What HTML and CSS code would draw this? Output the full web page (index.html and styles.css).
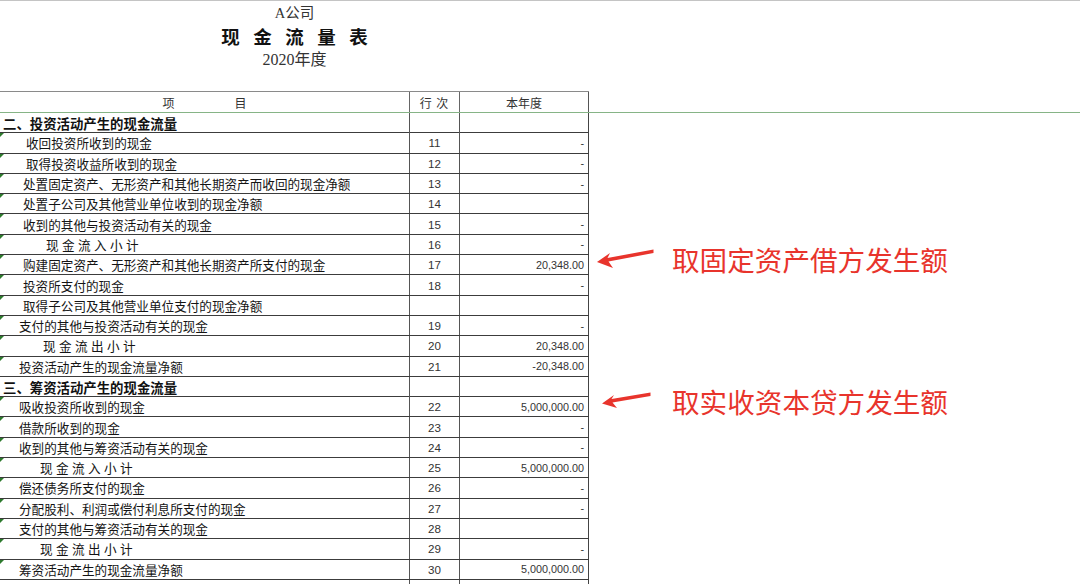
FILE: index.html
```html
<!DOCTYPE html>
<html lang="zh-CN">
<head>
<meta charset="utf-8">
<title>现金流量表</title>
<link rel="stylesheet" href="styles.css">
</head>
<body>
<div class="page">
  <header class="title-block">
    <div class="company">A公司</div>
    <div class="title">现金流量表</div>
    <div class="year">2020年度</div>
  </header>

  <div class="thead">
    <div class="hc c1"><span>项</span><span>目</span></div>
    <div class="hc c2">行 次</div>
    <div class="hc c3">本年度</div>
  </div>

  <div class="tbody">
    <div class="row sec"><div class="c1 t0">二、投资活动产生的现金流量</div><div class="c2"></div><div class="c3"></div></div>
    <div class="row"><div class="c1 t26">收回投资所收到的现金</div><div class="c2">11</div><div class="c3">-</div></div>
    <div class="row"><div class="c1 t26">取得投资收益所收到的现金</div><div class="c2">12</div><div class="c3">-</div></div>
    <div class="row"><div class="c1 t23">处置固定资产、无形资产和其他长期资产而收回的现金净额</div><div class="c2">13</div><div class="c3">-</div></div>
    <div class="row"><div class="c1 t23">处置子公司及其他营业单位收到的现金净额</div><div class="c2">14</div><div class="c3"></div></div>
    <div class="row"><div class="c1 t23">收到的其他与投资活动有关的现金</div><div class="c2">15</div><div class="c3">-</div></div>
    <div class="row"><div class="c1 t46 sp">现金流入小计</div><div class="c2">16</div><div class="c3">-</div></div>
    <div class="row"><div class="c1 t23">购建固定资产、无形资产和其他长期资产所支付的现金</div><div class="c2">17</div><div class="c3">20,348.00</div></div>
    <div class="row"><div class="c1 t23">投资所支付的现金</div><div class="c2">18</div><div class="c3">-</div></div>
    <div class="row"><div class="c1 t23">取得子公司及其他营业单位支付的现金净额</div><div class="c2"></div><div class="c3"></div></div>
    <div class="row"><div class="c1 t19">支付的其他与投资活动有关的现金</div><div class="c2">19</div><div class="c3">-</div></div>
    <div class="row"><div class="c1 t43 sp">现金流出小计</div><div class="c2">20</div><div class="c3">20,348.00</div></div>
    <div class="row"><div class="c1 t19">投资活动产生的现金流量净额</div><div class="c2">21</div><div class="c3">-20,348.00</div></div>
    <div class="row sec"><div class="c1 t0">三、筹资活动产生的现金流量</div><div class="c2"></div><div class="c3"></div></div>
    <div class="row"><div class="c1 t19">吸收投资所收到的现金</div><div class="c2">22</div><div class="c3">5,000,000.00</div></div>
    <div class="row"><div class="c1 t19">借款所收到的现金</div><div class="c2">23</div><div class="c3">-</div></div>
    <div class="row"><div class="c1 t19">收到的其他与筹资活动有关的现金</div><div class="c2">24</div><div class="c3">-</div></div>
    <div class="row"><div class="c1 t40 sp">现金流入小计</div><div class="c2">25</div><div class="c3">5,000,000.00</div></div>
    <div class="row"><div class="c1 t19">偿还债务所支付的现金</div><div class="c2">26</div><div class="c3">-</div></div>
    <div class="row"><div class="c1 t19">分配股利、利润或偿付利息所支付的现金</div><div class="c2">27</div><div class="c3">-</div></div>
    <div class="row"><div class="c1 t19">支付的其他与筹资活动有关的现金</div><div class="c2">28</div><div class="c3"></div></div>
    <div class="row"><div class="c1 t40 sp">现金流出小计</div><div class="c2">29</div><div class="c3">-</div></div>
    <div class="row"><div class="c1 t19">筹资活动产生的现金流量净额</div><div class="c2">30</div><div class="c3">5,000,000.00</div></div>
    <div class="row sec"><div class="c1 t0"></div><div class="c2"></div><div class="c3"></div></div>
  </div>

  <div class="note note1">
    <svg class="arrow" width="70" height="30" viewBox="590 245 70 30"><polygon points="597,263 610,254 607.5,259 653.5,250.5 653.5,254 608.5,262.5 613,269"/></svg>
    <span class="note-text">取固定资产借方发生额</span>
  </div>
  <div class="note note2">
    <svg class="arrow" width="70" height="30" viewBox="590 390 70 30"><polygon points="602,407.5 614,399 611.5,403 650.5,396.5 650.5,400 612.5,406.5 617,412"/></svg>
    <span class="note-text">取实收资本贷方发生额</span>
  </div>
</div>
</body>
</html>
```

FILE: styles.css
```css
html, body {
  margin: 0;
  padding: 0;
  background: #fff;
}

.page {
  position: relative;
  width: 1080px;
  height: 584px;
  overflow: hidden;
  border-top: 1px solid #c4c4c4;
  box-sizing: border-box;
  font-family: "Noto Sans CJK SC", sans-serif;
  color: #151515;
}

.title-block {
  width: 589px;
  height: 90px;
  display: flex;
  flex-direction: column;
  align-items: center;
  padding-top: 2px;
  box-sizing: border-box;
}

.company {
  font-family: "Liberation Serif", "Noto Sans CJK SC", serif;
  font-size: 14.5px;
  line-height: 20px;
  color: #333;
}

.title {
  font-family: "Noto Sans CJK SC", sans-serif;
  font-weight: 700;
  font-size: 18.5px;
  line-height: 26px;
  letter-spacing: 13.5px;
  padding-left: 13.5px;
  color: #111;
}

.year {
  font-family: "Liberation Serif", "Noto Sans CJK SC", serif;
  font-size: 16px;
  line-height: 22px;
  color: #333;
}

.thead {
  width: 589px;
  height: 21px;
  display: grid;
  grid-template-columns: 409px 50px 130px;
  border-top: 1px solid #8a8a8a;
  box-sizing: border-box;
}

.hc {
  display: flex;
  align-items: center;
  justify-content: center;
  font-size: 12px;
  color: #333;
}

.hc.c1 {
  gap: 60px;
}

.hc.c2 {
  border-left: 1px solid #666;
  letter-spacing: 1px;
}

.hc.c3 {
  border-left: 1px solid #666;
  border-right: 1px solid #555;
}

.tbody {
  border-top: 1px solid #86b486;
}

.row {
  width: 589px;
  height: 20.3px;
  display: grid;
  grid-template-columns: 409px 50px 130px;
  border-bottom: 1px solid #3c3c3c;
  box-sizing: border-box;
}

.row > div {
  display: flex;
  align-items: center;
  white-space: nowrap;
}

.row .c1 {
  position: relative;
  font-size: 12.6px;
  color: #141414;
}

.row:not(.sec) .c1::before {
  content: "";
  position: absolute;
  left: 0;
  top: 0;
  border-top: 4px solid #2d7a2d;
  border-right: 4px solid transparent;
}

.row.sec .c1 {
  font-weight: 700;
  font-size: 13.4px;
  color: #111;
}

.row .c2 {
  justify-content: center;
  border-left: 1px solid #555;
  font-family: "Liberation Sans", Arial, sans-serif;
  font-size: 11.6px;
  color: #333;
}

.row .c3 {
  justify-content: flex-end;
  padding-right: 4px;
  border-left: 1px solid #555;
  border-right: 1px solid #444;
  font-family: "Liberation Sans", Arial, sans-serif;
  font-size: 10.8px;
  color: #333;
}

.t0 { padding-left: 3px; }
.t19 { padding-left: 19px; }
.t23 { padding-left: 23px; }
.t26 { padding-left: 26px; }
.t40 { padding-left: 40px; }
.t43 { padding-left: 43px; }
.t46 { padding-left: 46px; }

.sp {
  letter-spacing: 3.4px;
}

.note {
  position: absolute;
  display: flex;
  align-items: center;
  gap: 12px;
}

.note1 {
  left: 590px;
  top: 242px;
}

.note2 {
  left: 590px;
  top: 384px;
}

.arrow polygon {
  fill: #e8342c;
}

.note-text {
  font-family: "Noto Sans CJK SC", sans-serif;
  font-size: 27.6px;
  line-height: 32px;
  color: #e8342c;
  white-space: nowrap;
}
```
